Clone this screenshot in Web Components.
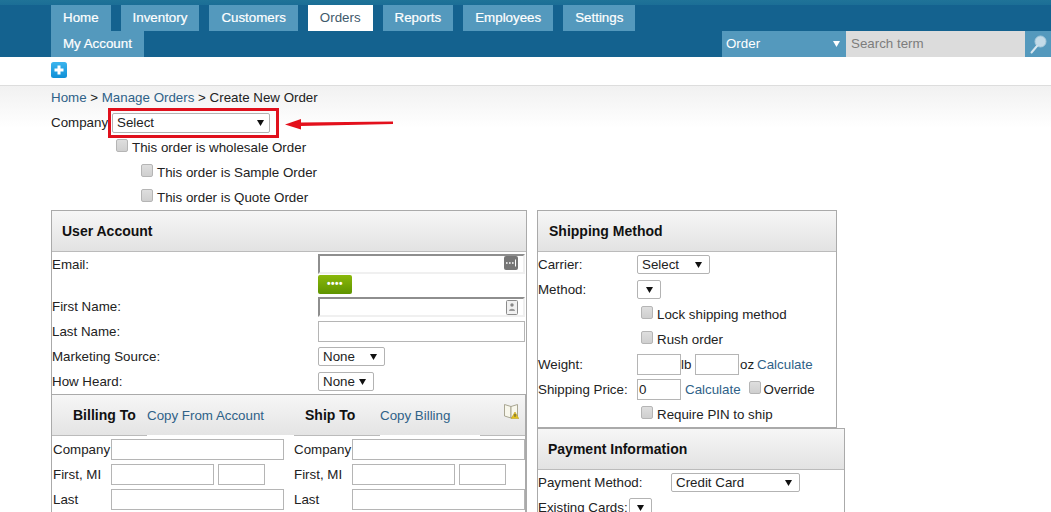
<!DOCTYPE html>
<html lang="en"><head><meta charset="utf-8"><title>Create New Order</title>
<style>
html,body{margin:0;height:512px;overflow:hidden;background:#fff}
body{font:13.3333px/25px "Liberation Sans",Arial,sans-serif;color:#222}
</style></head><body>
<oc-app>
  <oc-nav>
    <oc-tab slot="top">Home</oc-tab><oc-tab slot="top">Inventory</oc-tab><oc-tab slot="top">Customers</oc-tab><oc-tab slot="top" active>Orders</oc-tab><oc-tab slot="top">Reports</oc-tab><oc-tab slot="top">Employees</oc-tab><oc-tab slot="top">Settings</oc-tab>
    <oc-tab slot="bottom">My Account</oc-tab>
    <oc-search slot="bottom"></oc-search>
  </oc-nav>
  <oc-toolbar></oc-toolbar>
  <oc-content>
    <oc-crumbs></oc-crumbs>
    <oc-company></oc-company>
    <oc-check style="margin-left:65px">This order is wholesale Order</oc-check>
    <oc-check style="margin-left:90px">This order is Sample Order</oc-check>
    <oc-check style="margin-left:90px">This order is Quote Order</oc-check>
    <oc-columns>
      <oc-panel slot="left" heading="User Account" style="width:476px">
        <oc-row label="Email:" cols="266px 1fr" style="height:42px">
          <oc-stack style="padding-top:2px">
            <oc-field kind="sunken" icon="dots" style="width:207px;height:20px"></oc-field>
            <oc-go>••••</oc-go>
          </oc-stack>
        </oc-row>
        <oc-row label="First Name:" cols="266px 1fr"><oc-field kind="sunken" icon="card" style="width:207px;height:20px"></oc-field></oc-row>
        <oc-row label="Last Name:" cols="266px 1fr"><oc-field style="width:207px"></oc-field></oc-row>
        <oc-row label="Marketing Source:" cols="266px 1fr"><oc-select style="width:67px">None</oc-select></oc-row>
        <oc-row label="How Heard:" cols="266px 1fr"><oc-select style="width:56px">None</oc-select></oc-row>
        <oc-address></oc-address>
      </oc-panel>
      <oc-stack slot="right">
        <oc-panel heading="Shipping Method" style="width:300px" pad="11">
          <oc-row label="Carrier:" cols="99px 1fr"><oc-select style="width:73px">Select</oc-select></oc-row>
          <oc-row label="Method:" cols="99px 1fr"><oc-select style="width:24px"></oc-select></oc-row>
          <oc-check style="margin-left:103px">Lock shipping method</oc-check>
          <oc-check style="margin-left:103px">Rush order</oc-check>
          <oc-row label="Weight:" cols="99px 1fr"><oc-weight></oc-weight></oc-row>
          <oc-row label="Shipping Price:" cols="99px 1fr"><oc-price></oc-price></oc-row>
          <oc-check style="margin-left:103px">Require PIN to ship</oc-check>
        </oc-panel>
        <oc-panel heading="Payment Information" style="width:308px">
          <oc-row label="Payment Method:" cols="133px 1fr"><oc-select style="width:129px">Credit Card</oc-select></oc-row>
          <oc-row label="Existing Cards:" cols="91px 1fr"><oc-select style="width:23px"></oc-select></oc-row>
        </oc-panel>
      </oc-stack>
    </oc-columns>
  </oc-content>
</oc-app>
<script>
function def(name, html, setup){
  customElements.define(name, class extends HTMLElement{
    constructor(){super();const r=this.attachShadow({mode:'open'});r.innerHTML=typeof html==='function'?html(this):html;}
    connectedCallback(){
      if(typeof html==='function'){this.shadowRoot.innerHTML=html(this);}
      if(setup)setup(this);
    }
  });
}
const LINK='#2f6288';
const FONT='13.3333px "Liberation Sans",Arial,sans-serif';
const ARROW=c=>`<svg width="7" height="6" viewBox="0 0 7 6" aria-hidden="true"><path d="M0 0H7L3.5 6Z" fill="${c}"/></svg>`;

def('oc-app',`<style>:host{display:block;width:1051px}</style><slot></slot>`);

def('oc-nav',`<style>
:host{display:block;height:57px;box-sizing:border-box;padding:5px 0 0 51px;background:linear-gradient(#1f7398 0,#1b6e96 5px,#14628f 5px)}
.r{display:flex;gap:10px;height:26px}
.b{gap:0;justify-content:space-between}
</style><div class="r"><slot name="top"></slot></div><div class="r b"><slot name="bottom"></slot></div>`);

def('oc-tab',`<style>
:host{display:block;height:26px;padding:0 12px;background:#5499bd;color:#fff;line-height:25px;-webkit-text-stroke:.2px #fff}
:host([active]){background:#fff;color:#3f5a6c;-webkit-text-stroke:0}
</style><slot></slot>`);

def('oc-search',`<style>
:host{display:flex;height:26px;width:329px}
.t{width:124px;box-sizing:border-box;background:#5499bd;color:#fff;padding:0 6px 0 4px;display:flex;align-items:center;justify-content:space-between}
.t span{line-height:28px}
.t svg{margin-top:-1px}
input{width:179px;box-sizing:border-box;border:0;margin:0;background:#dcdcdc;padding:0 5px 2px;font:${FONT};color:#777;outline:0}
input::placeholder{color:#7d7d7d;opacity:1}
.s{width:26px;background:#5499bd;display:flex;align-items:center;justify-content:center}
</style><div class="t"><span>Order</span>${ARROW('#fff')}</div><input placeholder="Search term"><div class="s">
<svg width="17" height="19" viewBox="0 0 17 19" aria-hidden="true"><circle cx="10.5" cy="6.5" r="5.5" fill="#c3dbe8" stroke="#a9cadc"/><path d="M7 11L1.5 17.5" stroke="#d6e6ef" stroke-width="2" stroke-linecap="round"/></svg></div>`);

def('oc-toolbar',`<style>
:host{display:block;height:28px;box-sizing:border-box;padding:5px 0 0 51px;background:#fff}
svg{display:block}
</style><svg width="16" height="16" viewBox="0 0 16 16" aria-hidden="true"><defs><linearGradient id="g" x1="0" y1="0" x2="0" y2="1"><stop offset="0" stop-color="#3cb5ee"/><stop offset="1" stop-color="#0f8fd6"/></linearGradient></defs><rect width="16" height="16" rx="2.5" fill="url(#g)"/><path d="M8 3.5V12.5M3.5 8H12.5" stroke="#fff" stroke-width="3"/></svg>`);

def('oc-content',`<style>
:host{display:block;padding-left:51px;border-top:1px solid #ddd;background:linear-gradient(#f1f1f1,#fff 42px) no-repeat;background-color:#fff;height:426px;overflow:hidden}
</style><slot></slot>`);

def('oc-crumbs',`<style>
:host{display:block;height:24px;line-height:23px}
a{color:${LINK};text-decoration:none}
</style><a href="#">Home</a> &gt; <a href="#">Manage Orders</a> &gt; Create New Order`);

def('oc-company',`<style>
:host{display:flex;height:25px;align-items:center;position:relative}
span{width:61px;flex:none}
oc-select{width:158px;height:20px;padding-right:5px}
.box{position:absolute;left:57px;top:-2px;width:171px;height:30px;box-sizing:border-box;border:3px solid #e0101c}
svg{position:absolute;left:234px;top:8px}
</style><span>Company</span><oc-select>Select</oc-select><div class="box"></div>
<svg width="110" height="12" viewBox="0 0 110 12" aria-hidden="true"><path d="M0 6.5L16 1V4.6L108 3.6V6L16 8V11.5Z" fill="#e3101c"/></svg>`);

def('oc-select',`<style>
:host{display:inline-flex;box-sizing:border-box;height:19px;align-items:center;justify-content:space-between;border:1px solid #b3b3b3;border-radius:2px;background:#fff;padding:0 7px 0 4px;line-height:17px;color:#222}
svg{flex:none}
:host(:empty){justify-content:center;padding:0}
</style><slot></slot>${ARROW('#111')}`);

def('oc-check',`<style>
:host{display:flex;height:25px;align-items:center}
input{appearance:none;-webkit-appearance:none;box-sizing:border-box;width:12px;height:13px;margin:0 4px 4px 0;border:1px solid #b5b5b5;border-radius:2px;background:linear-gradient(#dedede,#cfcfcf);flex:none}
</style><input type="checkbox"><span><slot></slot></span>`);

def('oc-columns',`<style>
:host{display:flex;gap:10px;align-items:flex-start}
</style><slot name="left"></slot><slot name="right"></slot>`);

def('oc-stack',`<style>:host{display:flex;flex-direction:column;align-items:flex-start}</style><slot></slot>`);

def('oc-panel',el=>`<style>
:host{display:block;box-sizing:border-box;border:1px solid #aaa;background:#fff}
header{height:41px;box-sizing:border-box;border-bottom:1px solid #bbb;padding-left:${el.getAttribute('pad')||10}px;background:linear-gradient(#f6f6f6,#e2e2e2);font-weight:bold;font-size:14px;line-height:40px;color:#111}
</style><header>${el.getAttribute('heading')||''}</header><slot></slot>`);

def('oc-row',el=>`<style>
:host{display:grid;grid-template-columns:${el.getAttribute('cols')||'100px 1fr'};height:25px;align-items:start}
.l{line-height:25px;white-space:nowrap}
.v{display:flex;align-items:center;min-height:25px}
</style><div class="l">${el.getAttribute('label')||''}</div><div class="v"><slot></slot></div>`);

def('oc-field',el=>{
  const ic=el.getAttribute('icon');
  const dots=`<svg width="14" height="14" viewBox="0 0 14 14" aria-hidden="true"><rect width="14" height="14" rx="2" fill="#767676"/><path d="M2 7h1.6M5 7h1.6M8 7h1.6" stroke="#fff" stroke-width="1.6"/><path d="M11.5 3.5V10.5" stroke="#fff"/></svg>`;
  const card=`<svg width="12" height="15" viewBox="0 0 12 15" aria-hidden="true"><rect x=".5" y=".5" width="11" height="14" rx="1" fill="#f1f1f1" stroke="#8c8c8c"/><circle cx="6" cy="5" r="1.7" fill="#888"/><path d="M3 11C3 8 9 8 9 11Z" fill="#999"/></svg>`;
  return `<style>
:host{display:block;position:relative;box-sizing:border-box;height:21px}
input{display:block;width:100%;height:100%;box-sizing:border-box;margin:0;border:1px solid #b5b5b5;background:#fff;padding:0 1px;font:${FONT};color:#222;outline:0}
:host([kind=sunken]) input{border-style:solid;border-width:2px;border-color:#8e8e8e #f0f0f0 #f0f0f0 #8e8e8e}
svg{position:absolute;right:7px;top:${ic==='card'?3:2}px}
</style><input type="text" value="${el.getAttribute('value')||''}">${ic==='dots'?dots:ic==='card'?card:''}`;
});

def('oc-go',`<style>
:host{display:block;width:34px;height:19px;margin-top:1px;box-sizing:border-box;border-radius:2px;background:linear-gradient(#8ab80a,#5f9400);color:#fff;text-align:center;font-size:10px;line-height:18px;font-weight:bold;letter-spacing:.5px}
</style><slot></slot>`);

def('oc-address',`<style>
:host{display:block;border-top:1px solid #aaa;border-right:1px solid #aaa}
.h{display:grid;grid-template-columns:74px 158px 75px 1fr 22px;height:40px;align-items:center;background:linear-gradient(#f6f6f6,#e4e4e4);padding-left:21px;box-sizing:border-box}
.h b{color:#111;font-size:14px}
a{color:${LINK};text-decoration:none}
.line{height:1px;background:linear-gradient(90deg,#bbb 0 95px,transparent 95px 242px,#bbb 242px 328px,transparent 328px 428px,#bbb 428px);margin-bottom:1px}
.g{display:grid;grid-template-columns:58px 173px 68px 173px;padding-left:1px}
.g>*{height:25px;display:flex;align-items:center;gap:4px;white-space:nowrap}
.g>:nth-child(4n+3){padding-left:10px}
svg{align-self:start;margin-top:9px;display:block;margin-left:1px}
</style>
<div class="h"><b>Billing To</b><a href="#">Copy From Account</a><b>Ship To</b><a href="#">Copy Billing</a>
<svg width="15" height="15" viewBox="0 0 15 15" aria-hidden="true"><path d="M.5 .5L7 2.5V14L.5 12Z" fill="#f8f7ec" stroke="#a09d88" stroke-width=".9"/><path d="M13.5 .5L7 2.5V14L13.5 12Z" fill="#f8f7ec" stroke="#a09d88" stroke-width=".9"/><path d="M11 8L14.8 14.6H7.2Z" fill="#e6c31e" stroke="#b09510" stroke-width=".5"/><path d="M11 10V12.8" stroke="#444"/></svg></div>
<div class="line"></div>
<div class="g">
<div>Company</div><div><oc-field style="width:173px"></oc-field></div><div>Company</div><div><oc-field style="width:173px"></oc-field></div>
<div>First, MI</div><div><oc-field style="width:103px"></oc-field><oc-field style="width:47px"></oc-field></div><div>First, MI</div><div><oc-field style="width:103px"></oc-field><oc-field style="width:47px"></oc-field></div>
<div>Last</div><div><oc-field style="width:173px"></oc-field></div><div>Last</div><div><oc-field style="width:173px"></oc-field></div>
</div>`);

def('oc-weight',`<style>
:host{display:flex;align-items:center;white-space:nowrap}
oc-field{width:44px}
a{color:${LINK};text-decoration:none;margin-left:4px}
span{width:14px}
</style><oc-field></oc-field><span>lb</span><oc-field></oc-field><span style="width:auto;margin-left:1px">oz</span><a href="#" style="margin-left:3px">Calculate</a>`);

def('oc-price',`<style>
:host{display:flex;align-items:center;white-space:nowrap}
oc-field{width:44px}
a{color:${LINK};text-decoration:none;margin-left:4px}
input{appearance:none;-webkit-appearance:none;box-sizing:border-box;width:12px;height:13px;margin:0 3px 4px 8px;border:1px solid #b5b5b5;border-radius:2px;background:linear-gradient(#dedede,#cfcfcf)}
</style><oc-field value="0"></oc-field><a href="#">Calculate</a><input type="checkbox"><span>Override</span>`);
</script>
</body></html>
